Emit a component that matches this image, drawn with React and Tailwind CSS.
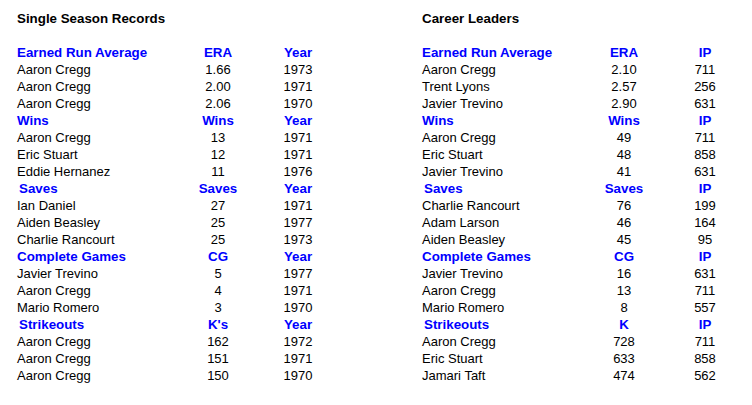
import React from "react";

const left = {
  title: "Single Season Records",
  widths: ["w-[160px]", "w-[82px]", "w-[78px]"],
  sections: [
    { h: ["Earned Run Average", "ERA", "Year"], rows: [["Aaron Cregg", "1.66", "1973"], ["Aaron Cregg", "2.00", "1971"], ["Aaron Cregg", "2.06", "1970"]] },
    { h: ["Wins", "Wins", "Year"], rows: [["Aaron Cregg", "13", "1971"], ["Eric Stuart", "12", "1971"], ["Eddie Hernanez", "11", "1976"]] },
    { h: ["Saves", "Saves", "Year"], indent: true, rows: [["Ian Daniel", "27", "1971"], ["Aiden Beasley", "25", "1977"], ["Charlie Rancourt", "25", "1973"]] },
    { h: ["Complete Games", "CG", "Year"], rows: [["Javier Trevino", "5", "1977"], ["Aaron Cregg", "4", "1971"], ["Mario Romero", "3", "1970"]] },
    { h: ["Strikeouts", "K's", "Year"], indent: true, rows: [["Aaron Cregg", "162", "1972"], ["Aaron Cregg", "151", "1971"], ["Aaron Cregg", "150", "1970"]] },
  ],
};

const right = {
  title: "Career Leaders",
  widths: ["w-[161px]", "w-[82px]", "w-[80px]"],
  sections: [
    { h: ["Earned Run Average", "ERA", "IP"], rows: [["Aaron Cregg", "2.10", "711"], ["Trent Lyons", "2.57", "256"], ["Javier Trevino", "2.90", "631"]] },
    { h: ["Wins", "Wins", "IP"], rows: [["Aaron Cregg", "49", "711"], ["Eric Stuart", "48", "858"], ["Javier Trevino", "41", "631"]] },
    { h: ["Saves", "Saves", "IP"], indent: true, rows: [["Charlie Rancourt", "76", "199"], ["Adam Larson", "46", "164"], ["Aiden Beasley", "45", "95"]] },
    { h: ["Complete Games", "CG", "IP"], rows: [["Javier Trevino", "16", "631"], ["Aaron Cregg", "13", "711"], ["Mario Romero", "8", "557"]] },
    { h: ["Strikeouts", "K", "IP"], indent: true, rows: [["Aaron Cregg", "728", "711"], ["Eric Stuart", "633", "858"], ["Jamari Taft", "474", "562"]] },
  ],
};

function Table({ data }) {
  const [w0, w1, w2] = data.widths;
  return (
    <div className="flex flex-col">
      <div className="h-[17px] leading-[17px] font-bold text-black mb-[17px] text-[13.33px]">{data.title}</div>
      {data.sections.map((s, i) => (
        <div key={i} className="flex flex-col">
          <div className="flex h-[17px] leading-[17px] font-bold text-[#0000ff] text-[13.33px]">
            <div className={`${w0} ${s.indent ? "pl-[2px]" : ""} whitespace-nowrap`}>{s.h[0]}</div>
            <div className={`${w1} text-center`}>{s.h[1]}</div>
            <div className={`${w2} text-center`}>{s.h[2]}</div>
          </div>
          {s.rows.map((r, j) => (
            <div key={j} className="flex h-[17px] leading-[17px] text-black text-[13px]">
              <div className={`${w0} whitespace-nowrap`}>{r[0]}</div>
              <div className={`${w1} text-center`}>{r[1]}</div>
              <div className={`${w2} text-center`}>{r[2]}</div>
            </div>
          ))}
        </div>
      ))}
    </div>
  );
}

export default function App() {
  return (
    <div
      className="w-[752px] h-[405px] bg-white flex pt-[10px]"
      style={{ fontFamily: '"Liberation Sans", Arial, sans-serif' }}
    >
      <div className="ml-[17px]">
        <Table data={left} />
      </div>
      <div className="ml-[85px]">
        <Table data={right} />
      </div>
    </div>
  );
}
